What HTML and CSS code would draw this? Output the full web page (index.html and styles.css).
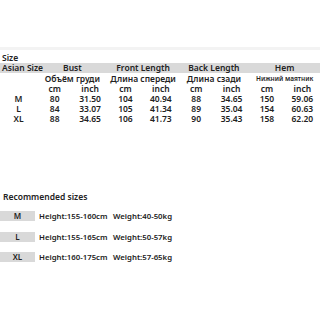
FILE: index.html
```html
<!DOCTYPE html>
<html>
<head>
<meta charset="utf-8">
<link rel="stylesheet" href="styles.css">
</head>
<body>
<div class="page">
  <div class="rule"></div>
  <div class="title">Size</div>
  <table class="sizes">
    <colgroup>
      <col class="c0"><col><col><col><col><col><col><col><col>
    </colgroup>
    <tr class="head">
      <td class="left">Asian Size</td>
      <td colspan="2">Bust</td>
      <td colspan="2">Front Length</td>
      <td colspan="2">Back Length</td>
      <td colspan="2">Hem</td>
    </tr>
    <tr class="ru">
      <td></td>
      <td colspan="2">Объём груди</td>
      <td colspan="2">Длина спереди</td>
      <td colspan="2">Длина сзади</td>
      <td colspan="2" class="small">Нижний маятник</td>
    </tr>
    <tr>
      <td></td><td>cm</td><td>inch</td><td>cm</td><td>inch</td><td>cm</td><td>inch</td><td>cm</td><td>inch</td>
    </tr>
    <tr>
      <td>M</td><td>80</td><td>31.50</td><td>104</td><td>40.94</td><td>88</td><td>34.65</td><td>150</td><td>59.06</td>
    </tr>
    <tr>
      <td>L</td><td>84</td><td>33.07</td><td>105</td><td>41.34</td><td>89</td><td>35.04</td><td>154</td><td>60.63</td>
    </tr>
    <tr>
      <td>XL</td><td>88</td><td>34.65</td><td>106</td><td>41.73</td><td>90</td><td>35.43</td><td>158</td><td>62.20</td>
    </tr>
  </table>

  <div class="rec-title">Recommended sizes</div>
  <div class="rec">
    <div class="rec-row"><span class="tag">M</span><span class="h">Height:155-160cm</span><span class="w">Weight:40-50kg</span></div>
    <div class="rec-row"><span class="tag">L</span><span class="h">Height:155-165cm</span><span class="w">Weight:50-57kg</span></div>
    <div class="rec-row"><span class="tag">XL</span><span class="h">Height:160-175cm</span><span class="w">Weight:57-65kg</span></div>
  </div>
</div>
</body>
</html>
```

FILE: styles.css
```css
html, body {
  margin: 0;
  padding: 0;
  background: #ffffff;
}
.page {
  width: 320px;
  height: 320px;
  padding-top: 47px;
  box-sizing: border-box;
  font-family: "Noto Sans", "Open Sans", sans-serif;
  font-weight: 600;
  color: #222;
  font-size: 8.5px;
}
.rule {
  height: 3px;
  background: #f3f3f3;
  margin-bottom: 2px;
}
.title {
  height: 11px;
  line-height: 11px;
  padding-left: 2px;
  font-size: 8.5px;
}
.sizes {
  width: 320px;
  border-collapse: collapse;
  table-layout: fixed;
}
.sizes col.c0 { width: 37px; }
.sizes td {
  padding: 0;
  height: 10px;
  line-height: 10px;
  text-align: center;
  white-space: nowrap;
  overflow: visible;
}
.sizes tr.head td {
  background: #d9d9d9;
  font-size: 8.5px;
}
.sizes tr.ru td {
  height: 11px;
  line-height: 11px;
}
.sizes td.left {
  text-align: left;
  padding-left: 2px;
}
.sizes td.small {
  font-size: 6.5px;
}
.rec-title {
  margin-top: 67px;
  height: 12px;
  line-height: 12px;
  padding-left: 3px;
  font-size: 8.5px;
}
.rec {
  margin-top: 8px;
  display: flex;
  flex-direction: column;
  gap: 10.5px;
}
.rec-row {
  display: flex;
  align-items: center;
  height: 10px;
  font-size: 7.8px;
  white-space: nowrap;
}
.tag {
  flex: none;
  width: 35px;
  height: 10px;
  line-height: 10px;
  background: #d9d9d9;
  text-align: center;
  font-size: 8px;
  margin-right: 4px;
}
.rec-row .h {
  flex: none;
  width: 74px;
}
.rec-row .w {
  flex: none;
}
```
